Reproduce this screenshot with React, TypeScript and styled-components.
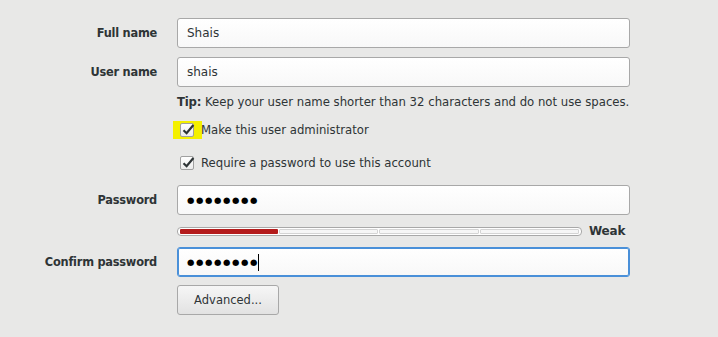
import React from "react";
import styled, { createGlobalStyle } from "styled-components";

const GlobalStyle = createGlobalStyle`
  html, body {
    margin: 0;
    padding: 0;
    background: #e8e8e7;
  }
  body {
    font-family: "DejaVu Sans", "Liberation Sans", sans-serif;
    font-size: 11.7px;
    color: #2e3436;
  }
`;

const SEGMENTS = [1, 0, 0, 0];

export default function App() {
  return (
    <>
      <GlobalStyle />
      <Form>
        <Row $top={18}>
          <Label>Full name</Label>
          <Entry>Shais</Entry>
        </Row>
        <Row $top={9}>
          <Label>User name</Label>
          <Entry>shais</Entry>
        </Row>
        <Row $top={8}>
          <Label />
          <Tip>
            <b>Tip:</b> Keep your user name shorter than 32 characters and do not use spaces.
          </Tip>
        </Row>
        <Row $top={12}>
          <Label />
          <Check $highlight>
            <Box>
              <Tick />
            </Box>
            Make this user administrator
          </Check>
        </Row>
        <Row $top={15}>
          <Label />
          <Check>
            <Box>
              <Tick />
            </Box>
            Require a password to use this account
          </Check>
        </Row>
        <Row $top={13}>
          <Label>Password</Label>
          <Entry>
            <Dots>●●●●●●●●</Dots>
          </Entry>
        </Row>
        <Row $top={9}>
          <Label />
          <Strength>
            <Level>
              {SEGMENTS.map((on, i) => (
                <Segment key={i} $on={!!on} />
              ))}
            </Level>
            <Weak>Weak</Weak>
          </Strength>
        </Row>
        <Row $top={9}>
          <Label>Confirm password</Label>
          <Entry $focused>
            <Dots>●●●●●●●●</Dots>
            <Caret />
          </Entry>
        </Row>
        <Row $top={8}>
          <Label />
          <Button>Advanced...</Button>
        </Row>
      </Form>
    </>
  );
}

const Form = styled.div`
  display: flex;
  flex-direction: column;
  width: 718px;
`;

const Row = styled.div<{ $top: number }>`
  display: flex;
  align-items: center;
  gap: 20px;
  margin-top: ${(p) => p.$top}px;
`;

const Label = styled.div`
  width: 157px;
  flex: none;
  text-align: right;
  font-weight: bold;
  font-size: 11.4px;
  letter-spacing: -0.25px;
  color: #2e3436;
`;

const Entry = styled.div<{ $focused?: boolean }>`
  box-sizing: border-box;
  width: 453px;
  height: 30px;
  display: flex;
  align-items: center;
  padding-left: 9px;
  border: 1px solid ${(p) => (p.$focused ? "#4a90d9" : "#a8a8a8")};
  box-shadow: ${(p) => (p.$focused ? "inset 0 0 0 1px #4a90d9" : "none")};
  border-radius: 3px;
  background: linear-gradient(#ffffff, #f8f8f8);
  font-size: 12px;
  color: #2e3436;
`;

const Dots = styled.span`
  font-size: 8.5px;
  letter-spacing: 1.6px;
  color: #000;
`;

const Caret = styled.span`
  display: inline-block;
  width: 1px;
  height: 17px;
  background: #000;
  margin-left: -1px;
`;

const Tip = styled.div`
  font-size: 11.7px;
  color: #2e3436;
  white-space: nowrap;

  b {
    letter-spacing: -0.2px;
  }
`;

const Check = styled.div<{ $highlight?: boolean }>`
  display: flex;
  align-items: center;
  gap: 7px;
  margin-left: ${(p) => (p.$highlight ? "-4px" : "3px")};
  padding-left: ${(p) => (p.$highlight ? "7px" : "0")};
  background: ${(p) =>
    p.$highlight
      ? "linear-gradient(to right, #f4f000 0, #f4f000 29px, transparent 29px)"
      : "none"};
  height: 18px;
  font-size: 11.7px;
  color: #2e3436;
`;

const Box = styled.div`
  box-sizing: border-box;
  width: 14px;
  height: 14px;
  border: 1px solid #a0a0a0;
  border-radius: 2px;
  background: linear-gradient(#ffffff, #ececec);
  position: relative;
`;

const Tick = () => (
  <TickSvg viewBox="0 0 14 14">
    <path d="M2.5 7.2 L5.6 10.2 L12.4 2" fill="none" stroke="#2e3436" strokeWidth="2.2" />
  </TickSvg>
);

const TickSvg = styled.svg`
  position: absolute;
  left: 0;
  top: -1px;
  width: 14px;
  height: 14px;
`;

const Strength = styled.div`
  display: flex;
  align-items: center;
  gap: 7px;
`;

const Level = styled.div`
  box-sizing: border-box;
  width: 405px;
  height: 9px;
  display: flex;
  gap: 1px;
  padding: 1px 2px;
  border: 1px solid #a8a8a8;
  border-radius: 4px;
  background: #fff;
`;

const Segment = styled.div<{ $on: boolean }>`
  flex: 1;
  background: ${(p) => (p.$on ? "#b41b1b" : "#f6f6f6")};
  border: ${(p) => (p.$on ? "none" : "1px solid #d4d4d4")};
  border-radius: 1px;
`;

const Weak = styled.div`
  font-weight: bold;
  font-size: 12px;
  letter-spacing: -0.2px;
  color: #2e3436;
`;

const Button = styled.button`
  box-sizing: border-box;
  width: 102px;
  height: 30px;
  border: 1px solid #a8a8a8;
  border-radius: 3px;
  background: linear-gradient(#f6f6f6, #e2e2e2);
  font-family: "DejaVu Sans", "Liberation Sans", sans-serif;
  font-size: 11.5px;
  color: #2e3436;
  padding: 0;
`;
